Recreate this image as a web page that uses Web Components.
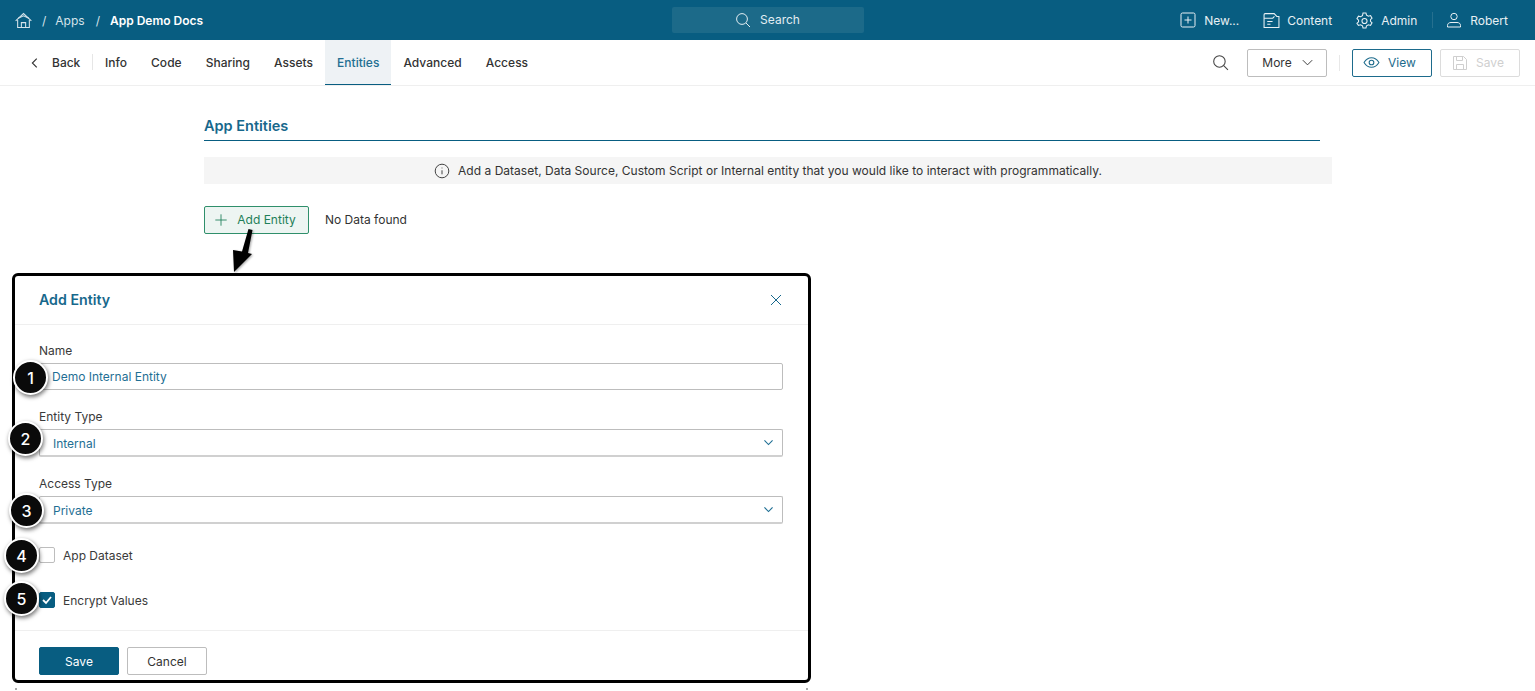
<!DOCTYPE html>
<html lang="en">
<head>
<meta charset="utf-8">
<title>App Entities</title>
<style>
    html, body {
        margin: 0;
        height: 100%;
        overflow: hidden;
        background: #fff;
        font-family: Inter, "Liberation Sans", sans-serif;
    }
    body {
        position: relative;
        height: 691px;
    }
</style>
</head>
<body>
<app-topbar></app-topbar>
<app-tabs></app-tabs>
<app-entities></app-entities>
<entity-modal></entity-modal>
<script>
const icons = {
    home: '<path d="M.6 8.3 8 1.5l7.4 6.8"/><path d="M3 5.8 8 3.6l5 2.2"/><path d="M2.5 7.5v7h11v-7"/><path d="M6 14.5V10h4v4.5"/>',
    search: '<circle cx="7" cy="7" r="5.4"/><path d="m11 11 4 4"/>',
    plusBox: '<rect x="1" y="1" width="14" height="14" rx="1.5"/><path d="M8 4.5v7M4.5 8h7"/>',
    folder: '<path d="M1 2.500c0-.6.4-1 1-1h8.500L13 4.200h2V14.500H1z"/><path d="M1 5.800h8.200l1.600-1.600"/><path d="M4 9h5M4 11.500h3"/>',
    gear: '<path d="M6.600 1h2.800l.5 2 1.800 1 2-.6 1.400 2.400-1.500 1.400v1.600l1.500 1.400-1.400 2.400-2-.6-1.800 1-.5 2H6.600l-.5-2-1.800-1-2 .6L.9 10.700l1.500-1.400V7.700L.9 6.300l1.400-2.400 2 .6 1.800-1z"/><circle cx="8" cy="8.500" r="2.400"/>',
    user: '<circle cx="8" cy="4.500" r="3.200"/><path d="M1.500 15v-1.500C1.500 11.500 3 10.500 5 10.500h6c2 0 3.500 1 3.500 3V15z"/>',
    back: '<path d="m10 3-5 5 5 5"/>',
    chevron: '<path d="m3 5.500 5 5 5-5"/>',
    eye: '<path d="M1 8c1.800-3 4.200-4.500 7-4.500S13.200 5 15 8c-1.800 3-4.200 4.500-7 4.500S2.800 11 1 8Z"/><circle cx="8" cy="8" r="2.200"/>',
    save: '<path d="M1.500 1.500h10l3 3v10h-13z"/><path d="M4.500 1.500v4h6v-4"/><path d="M4.500 14.500V9.500h7v5"/>',
    info: '<circle cx="8" cy="8" r="6.800"/><path d="M8 7.300v4"/><path d="M8 4.600v.8"/>',
    plus: '<path d="M8 1.500v13M1.500 8h13"/>',
    close: '<path d="m3 3 10 10M13 3 3 13"/>'
};

function icon(name, size, width) {
    return `<svg width="${size}" height="${size}" viewBox="0 0 16 16" fill="none" stroke="currentColor" stroke-width="${width || 1}" aria-hidden="true">${icons[name]}</svg>`;
}

class AppTopbar extends HTMLElement {
    constructor() {
        super();
        this.attachShadow({mode: 'open'});
        this.shadowRoot.innerHTML = `
        <style>
            :host {
                display: grid;
                grid-template-columns: 1fr 192px 1fr;
                align-items: center;
                height: 40px;
                background: #085d81;
                color: #fff;
                font-size: 12px;
                font-family: Inter, "Liberation Sans", sans-serif;
            }
            .crumbs, .menu, .item { display: flex; align-items: center; }
            .crumbs { padding-left: 15px; color: #d5e3ea; }
            .crumbs svg { margin-right: 10px; }
            .crumbs .sl { margin: 0 9px 0 0; }
            .crumbs .app { margin-right: 11px; }
            .crumbs b { font-weight: 600; color: #fff; margin-left: 1px; }
            .search {
                display: flex;
                align-items: center;
                justify-content: center;
                gap: 9px;
                height: 26px;
                background: #1c6a89;
                border-radius: 2px;
                color: #e2edf2;
            }
            .search span { padding-bottom: 2px; }
            .menu { justify-content: flex-end; padding-right: 27px; color: #e8f0f4; }
            .item { gap: 8px; }
            .item + .item { margin-left: 24px; }
            .item.content { gap: 7px; }
            .item.user { margin-left: 15px; padding-left: 13px; border-left: 1px solid #26708f; height: 16px; gap: 8px; }
        </style>
        <nav class="crumbs">
            ${icon('home', 17)}
            <span class="sl">/</span><span class="app">Apps</span><span class="sl">/</span><b>App Demo Docs</b>
        </nav>
        <div class="search">${icon('search', 16)}<span>Search</span></div>
        <div class="menu">
            <div class="item">${icon('plusBox', 16)}<span>New...</span></div>
            <div class="item content">${icon('folder', 17)}<span>Content</span></div>
            <div class="item">${icon('gear', 17)}<span>Admin</span></div>
            <div class="item user">${icon('user', 16)}<span>Robert</span></div>
        </div>`;
    }
}

class ToolButton extends HTMLElement {
    constructor() {
        super();
        this.attachShadow({mode: 'open'});
        this.shadowRoot.innerHTML = `
        <style>
            :host {
                display: inline-flex;
                align-items: center;
                justify-content: center;
                box-sizing: border-box;
                width: 80px;
                height: 28px;
                gap: 8px;
                border: 1px solid #bdbdbd;
                border-radius: 2px;
                font-size: 12px;
                color: #333;
                background: #fff;
            }
            :host([variant="more"]) { padding-left: 3px; }
            :host([variant="view"]) { border-color: #1d6b8c; color: #1d6b8c; padding-right: 5px; }
            :host([variant="off"]) { border-color: #dcdcdc; color: #cfcfcf; padding-right: 4px; }
            :host([variant="primary"]) { background: #085d81; border-color: #085d81; color: #fff; }
            :host([variant="add"]) {
                width: 105px;
                gap: 9px;
                padding: 0 3px 1px 0;
                border-color: #2f8f6b;
                background: #edf5f2;
                color: #1f8059;
            }
        </style>
        <slot name="before"></slot><slot></slot><slot name="after"></slot>`;
    }
}

class AppTabs extends HTMLElement {
    constructor() {
        super();
        this.attachShadow({mode: 'open'});
        const tabs = ['Info', 'Code', 'Sharing', 'Assets', 'Entities', 'Advanced', 'Access'];
        this.shadowRoot.innerHTML = `
        <style>
            :host {
                display: flex;
                align-items: stretch;
                box-sizing: border-box;
                height: 46px;
                padding: 0 15px 0 28px;
                border-bottom: 1px solid #efefef;
                font-size: 12px;
                color: #333;
                font-family: Inter, "Liberation Sans", sans-serif;
            }
            .back { display: flex; align-items: center; gap: 10px; width: 65px; position: relative; }
            .back::after { content: ""; position: absolute; right: 0; top: 14px; height: 16px; border-right: 1px solid #e6e6e6; }
            .back span { font-weight: 500; }
            .tab { display: flex; align-items: center; padding: 0 12px; font-weight: 500; letter-spacing: .02px; }
            .tab.on { background: #eef2f5; color: #236f92; box-shadow: inset 0 -1px 0 #085d81; }
            .right { margin-left: auto; display: flex; align-items: center; }
            .find { display: flex; margin-right: 18px; color: #444; }
            .sep { width: 1px; height: 16px; background: #e8e8e8; margin: 0 12px; }
            tool-button + tool-button { margin-left: 8px; }
            tool-button svg { display: block; }
        </style>
        <div class="back">${icon('back', 14, 1.3)}<span>Back</span></div>
        ${tabs.map(t => `<div class="tab ${t === 'Entities' ? 'on' : ''}">${t}</div>`).join('')}
        <div class="right">
            <span class="find">${icon('search', 17)}</span>
            <tool-button variant="more">More <span slot="after" style="display:flex">${icon('chevron', 15)}</span></tool-button>
            <span class="sep"></span>
            <tool-button variant="view"><span slot="before" style="display:flex">${icon('eye', 17)}</span>View</tool-button>
            <tool-button variant="off"><span slot="before" style="display:flex">${icon('save', 16)}</span>Save</tool-button>
        </div>`;
    }
}

class AppEntities extends HTMLElement {
    constructor() {
        super();
        this.attachShadow({mode: 'open'});
        this.shadowRoot.innerHTML = `
        <style>
            :host {
                display: block;
                padding: 32px 203px 0 204px;
                font-size: 12px;
                color: #333;
                font-family: Inter, "Liberation Sans", sans-serif;
            }
            h2 {
                margin: 0 12px 16px 0;
                padding-bottom: 5px;
                height: 17px;
                line-height: 15px;
                font-size: 14.5px;
                font-weight: 600;
                color: #17688c;
                border-bottom: 1px solid #085d81;
            }
            .note {
                display: flex;
                align-items: center;
                justify-content: center;
                gap: 8px;
                height: 27px;
                background: #f5f5f5;
                letter-spacing: .02px;
            }
            .note svg { color: #444; }
            .row { display: flex; align-items: center; gap: 16px; margin-top: 22px; }
            .row > span { padding-bottom: 2px; }
        </style>
        <h2>App Entities</h2>
        <div class="note">${icon('info', 16)}<span>Add a Dataset, Data Source, Custom Script or Internal entity that you would like to interact with programmatically.</span></div>
        <div class="row">
            <tool-button variant="add"><span slot="before" style="display:flex">${icon('plus', 14)}</span>Add Entity</tool-button>
            <span>No Data found</span>
        </div>`;
    }
}

class FormField extends HTMLElement {
    constructor() {
        super();
        this.attachShadow({mode: 'open'});
        const select = this.hasAttribute('select');
        this.shadowRoot.innerHTML = `
        <style>
            :host { display: block; }
            label { display: block; height: 14px; line-height: 16px; margin-bottom: 6px; color: #3a3a3a; }
            .box {
                display: flex;
                align-items: center;
                justify-content: space-between;
                box-sizing: border-box;
                height: 27px;
                padding: 0 13px 0 12px;
                border: 1px solid #bdbdbd;
                border-radius: 2px;
                color: #1f6f94;
            }
            :host([select]) .box { border-bottom-width: 2px; border-bottom-color: #d0d0d0; height: 28px; padding: 2px 13px 0; }
            svg { margin: -2px -6px 0 0; }
        </style>
        <label>${this.getAttribute('label')}</label>
        <div class="box"><span>${this.getAttribute('value')}</span>${select ? icon('chevron', 13, 1.4) : ''}</div>`;
    }
}

class CheckField extends HTMLElement {
    constructor() {
        super();
        this.attachShadow({mode: 'open'});
        this.shadowRoot.innerHTML = `
        <style>
            :host { display: flex; align-items: center; gap: 8px; height: 16px; color: #3a3a3a; }
            .mark {
                display: flex;
                box-sizing: border-box;
                width: 16px;
                height: 16px;
                border: 1px solid #bdbdbd;
                border-radius: 2px;
                color: #fff;
            }
            :host([checked]) .mark { background: #085d81; border-color: #085d81; }
        </style>
        <span class="mark">${this.hasAttribute('checked') ? '<svg width="14" height="14" viewBox="0 0 14 14" fill="none" stroke="currentColor" stroke-width="1.8"><path d="m3 7 3 3 5-6"/></svg>' : ''}</span>
        <span><slot></slot></span>`;
    }
}

class StepBadge extends HTMLElement {
    constructor() {
        super();
        this.attachShadow({mode: 'open'});
        this.shadowRoot.innerHTML = `
        <style>
            :host {
                position: absolute;
                display: flex;
                align-items: center;
                justify-content: center;
                box-sizing: border-box;
                width: 35px;
                height: 35px;
                border: 2px solid #fff;
                border-radius: 50%;
                background: #0a0a0a;
                color: #fff;
                font-size: 16px;
                font-weight: 500;
                box-shadow: 1px 2px 4px rgba(0, 0, 0, .55);
            }
        </style>
        <slot></slot>`;
    }
}

class EntityModal extends HTMLElement {
    constructor() {
        super();
        this.attachShadow({mode: 'open'});
        this.shadowRoot.innerHTML = `
        <style>
            :host {
                position: absolute;
                left: 12px;
                top: 273px;
                display: block;
                box-sizing: border-box;
                width: 799px;
                height: 410px;
                border: 3px solid #000;
                border-radius: 6px;
                background: #fff;
                font-size: 12px;
                color: #333;
                font-family: Inter, "Liberation Sans", sans-serif;
            }
            :host::before, :host::after {
                content: "";
                position: absolute;
                top: 412px;
                width: 2px;
                height: 2px;
                background: #aaa;
            }
            :host::before { left: 0; }
            :host::after { left: 791px; }
            header {
                display: flex;
                align-items: center;
                justify-content: space-between;
                height: 48px;
                padding: 0 24px 0 24px;
                border-bottom: 1px solid #efefef;
                color: #17688c;
            }
            h3 { margin: 0; font-size: 14.2px; font-weight: 600; line-height: 16px; padding-bottom: 1px; }
            header svg { display: block; }
            .body { display: flex; flex-direction: column; padding: 18px 25px 0 24px; height: 305px; box-sizing: border-box; }
            form-field + form-field { margin-top: 19px; }
            check-field { margin-top: 23px; }
            check-field + check-field { margin-top: 29px; }
            .foot { display: flex; gap: 8px; padding: 16px 24px 0; border-top: 1px solid #efefef; }
            .arrow { position: absolute; left: 214px; top: -47px; overflow: visible; filter: drop-shadow(1px 1px 1px rgba(0, 0, 0, .35)); }
            step-badge:nth-of-type(1) { left: -2px; top: 84px; }
            step-badge:nth-of-type(2) { left: -7px; top: 145px; }
            step-badge:nth-of-type(3) { left: -6px; top: 217px; }
            step-badge:nth-of-type(4) { left: -11px; top: 262px; }
            step-badge:nth-of-type(5) { left: -11px; top: 305px; }
        </style>
        <svg class="arrow" width="26" height="46" viewBox="0 0 26 46" aria-hidden="true">
            <path d="M19.5 0 23.5 1 19 24 23 25 5 43 4 21 13 22.5Z" fill="#000"/>
        </svg>
        <header>
            <h3>Add Entity</h3>
            ${icon('close', 16)}
        </header>
        <div class="body">
            <form-field label="Name" value="Demo Internal Entity"></form-field>
            <form-field label="Entity Type" value="Internal" select></form-field>
            <form-field label="Access Type" value="Private" select></form-field>
            <check-field>App Dataset</check-field>
            <check-field checked>Encrypt Values</check-field>
        </div>
        <div class="foot">
            <tool-button variant="primary">Save</tool-button>
            <tool-button>Cancel</tool-button>
        </div>
        <step-badge>1</step-badge>
        <step-badge>2</step-badge>
        <step-badge>3</step-badge>
        <step-badge>4</step-badge>
        <step-badge>5</step-badge>`;
    }
}

window.customElements.define('tool-button', ToolButton);
window.customElements.define('form-field', FormField);
window.customElements.define('check-field', CheckField);
window.customElements.define('step-badge', StepBadge);
window.customElements.define('app-topbar', AppTopbar);
window.customElements.define('app-tabs', AppTabs);
window.customElements.define('app-entities', AppEntities);
window.customElements.define('entity-modal', EntityModal);
</script>
</body>
</html>
